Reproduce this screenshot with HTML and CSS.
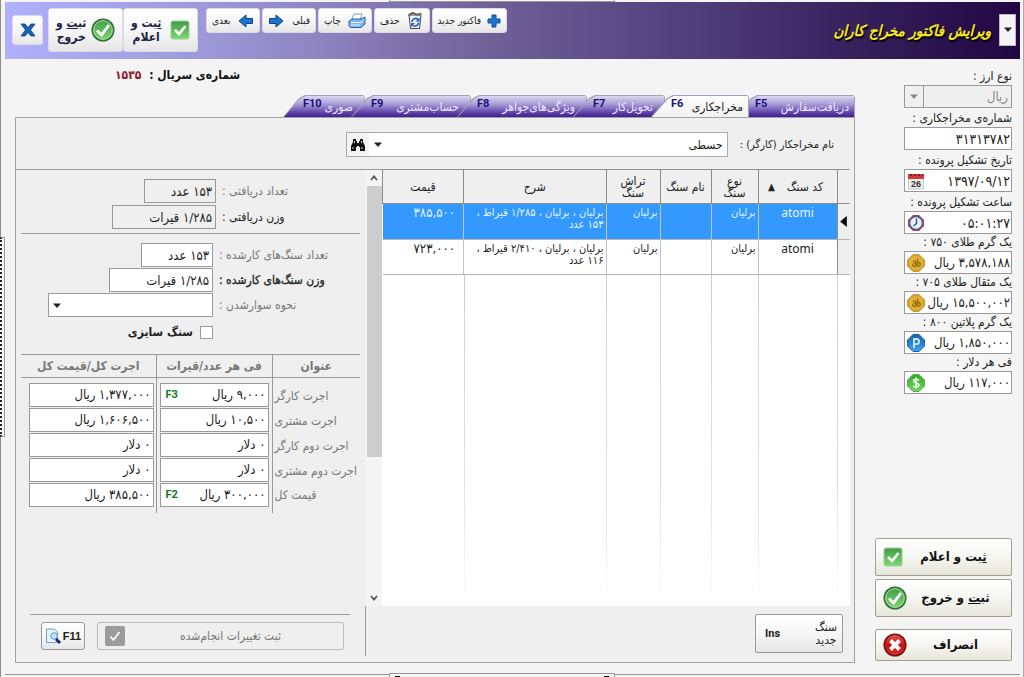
FILE: index.html
```html
<!DOCTYPE html>
<html lang="fa" dir="rtl">
<head>
<meta charset="utf-8">
<title>ویرایش فاکتور مخراج کاران</title>
<link rel="stylesheet" href="styles.css">
</head>
<body>
<svg class="sprite" aria-hidden="true">
  <defs>
    <linearGradient id="green" x1="0" y1="0" x2="0" y2="1"><stop offset="0" stop-color="#3f9a46"/><stop offset="1" stop-color="#7fd873"/></linearGradient>
    <radialGradient id="coin"><stop offset="0" stop-color="#d9a11c"/><stop offset="0.7" stop-color="#e2b43a"/><stop offset="1" stop-color="#c8961c"/></radialGradient>
    <linearGradient id="blue" x1="0" y1="0" x2="0" y2="1"><stop offset="0" stop-color="#1561b0"/><stop offset="1" stop-color="#3fa6ec"/></linearGradient>
    <linearGradient id="lime" x1="0" y1="0" x2="0" y2="1"><stop offset="0" stop-color="#35a52c"/><stop offset="1" stop-color="#6fdc58"/></linearGradient>
    <linearGradient id="red" x1="0" y1="0" x2="0" y2="1"><stop offset="0" stop-color="#e05a5a"/><stop offset="0.5" stop-color="#c41212"/><stop offset="1" stop-color="#d83030"/></linearGradient>
  </defs>
  <symbol id="i-square" viewBox="0 0 20 20"><rect x="1" y="1" width="18" height="18" rx="2" fill="url(#green)" stroke="#9ccf9c"/><path d="M5 10l4 4 6.500-8" fill="none" stroke="#fff" stroke-width="2.600"/></symbol>
  <symbol id="i-round" viewBox="0 0 24 24"><circle cx="12" cy="12" r="10.800" fill="url(#green)" stroke="#2f6f3a" stroke-width="1.500"/><circle cx="12" cy="12" r="9.300" fill="none" stroke="#a6dba0"/><path d="M6 12.500l4.500 4.500L18 7" fill="none" stroke="#fff" stroke-width="2.800"/></symbol>
  <symbol id="i-cancel" viewBox="0 0 24 24"><circle cx="12" cy="12" r="10.800" fill="url(#red)" stroke="#7b1010" stroke-width="1.500"/><path d="M7.500 7.500l9 9M16.500 7.500l-9 9" stroke="#fff" stroke-width="4"/></symbol>
  <symbol id="i-close" viewBox="0 0 16 16"><path d="M1 2h4l3 3.500L11 2h4l-4.500 6L15 14h-4l-3-3.500L5 14H1l4.500-6z" fill="#1763b4" stroke="#0d3f7d" stroke-width=".8"/></symbol>
  <symbol id="i-plus" viewBox="0 0 14 14"><path d="M5 1h4v4h4v4H9v4H5V9H1V5h4z" fill="#1c74cf" stroke="#114c92"/></symbol>
  <symbol id="i-left" viewBox="0 0 16 14"><path d="M1 7l7-6v3.500h6.500v5H8V13z" fill="#1c74cf" stroke="#0f4286"/></symbol>
  <symbol id="i-right" viewBox="0 0 16 14"><path d="M15 7L8 1v3.500H1.500v5H8V13z" fill="#1c74cf" stroke="#0f4286"/></symbol>
  <symbol id="i-print" viewBox="0 0 18 16"><path d="M6 1h8l-2 6H3.500z" fill="#fff" stroke="#6f9fd0"/><path d="M1 8l3-2h9l4-2v7l-4 3.500H2.500L1 13z" fill="#7db5ea" stroke="#2a66ad"/><path d="M3 9.500h10l3-2.500M3 12h9" fill="none" stroke="#e8f4ff"/></symbol>
  <symbol id="i-trash" viewBox="0 0 16 18"><path d="M2 3h12l-1.500 13.500H3.500z" fill="#f1f1f4" stroke="#44444c"/><path d="M1.500 3l4-2 5 1.500 4-1" fill="none" stroke="#6b5a4a" stroke-width="1.800"/><path d="M5 10a3.500 3.500 0 0 1 6-2.500M11.500 10.500a3.500 3.500 0 0 1-6 2.500" fill="none" stroke="#2a62c4" stroke-width="1.700"/><path d="M12.500 5.500v4h-4zM4 15v-4h4z" fill="#2a62c4"/></symbol>
  <symbol id="i-find" viewBox="0 0 16 14"><path d="M3 1h3v2h1v2h2V3h1V1h3v3l2 4v5h-5V9H9v-1H7v1H6v4H1V8l2-4z" fill="#111"/><path d="M3 9v2M4.500 3v2M11.500 3v2M12 9v2" stroke="#fff" stroke-width=".8"/></symbol>
  <symbol id="i-clock" viewBox="0 0 18 18"><path d="M6 1h6l5 5v6l-5 5H6l-5-5V6z" fill="#b23a48"/><circle cx="9" cy="9" r="6.300" fill="#e9f3ff" stroke="#3f68b0" stroke-width="1.200"/><path d="M9.500 4.500V9.500L6.500 12" fill="none" stroke="#2a55a5" stroke-width="1.500"/></symbol>
  <symbol id="i-gold" viewBox="0 0 18 18"><path d="M6 .5h6L17.500 6v6L12 17.500H6L.5 12V6z" fill="url(#coin)" stroke="#c29a3a"/><path d="M5.800 7.500c2.500-1.200 3.200 0 3.200 1.500v3.500M9 9.500c-4-.3-4 3-2 3 1.200 0 2-1 2-2M10.500 4.500V12c3.500 1.200 4-4 .2-3.500" fill="none" stroke="#8f6a10" stroke-width="1.200"/></symbol>
  <symbol id="i-plat" viewBox="0 0 18 18"><path d="M6 .5h6L17.500 6v6L12 17.500H6L.5 12V6z" fill="url(#blue)" stroke="#1b5c9c"/><path d="M7 14V5h2.500a2.500 2.500 0 0 1 0 5.200H7" fill="none" stroke="#cfe8ff" stroke-width="1.800"/></symbol>
  <symbol id="i-dollar" viewBox="0 0 18 18"><path d="M6 .5h6L17.500 6v6L12 17.500H6L.5 12V6z" fill="url(#lime)" stroke="#5dab55"/><path d="M12 6.500C10 4.500 6.500 5 6.500 7s5.500 2 5.500 4-3.500 2.800-6 .8M9 3.500v11" fill="none" stroke="#eaffea" stroke-width="1.700"/></symbol>
  <symbol id="i-page" viewBox="0 0 16 16"><path d="M1.500 1h8l3 3v10.500h-11z" fill="#eaf5fb" stroke="#6da3c4"/><circle cx="9" cy="8" r="3.300" fill="#bfe4f5" stroke="#5a9fc8"/><path d="M11 11l4 4" stroke="#16246e" stroke-width="2.800"/></symbol>
  <symbol id="i-gray" viewBox="0 0 20 20"><rect width="20" height="20" rx="2" fill="#9b9b9b"/><path d="M5.500 10.500l3 3.500 6-8" fill="none" stroke="#fff" stroke-width="1.700"/></symbol>
  <symbol id="i-down" viewBox="0 0 8 5"><path d="M0 0h8L4 4.500z" fill="currentColor"/></symbol>
  <symbol id="i-chev-up" viewBox="0 0 8 6"><path d="M1 5l3-3.500L7 5" fill="none" stroke="#555" stroke-width="1.800"/></symbol>
  <symbol id="i-chev-down" viewBox="0 0 8 6"><path d="M1 1l3 3.500L7 1" fill="none" stroke="#555" stroke-width="1.800"/></symbol>
</svg>

<div class="window">
  <header class="titlebar">
    <button class="menu-toggle" aria-label="فهرست"><svg class="arrow"><use href="#i-down"/></svg></button>
    <h1 class="title">ویرایش فاکتور مخراج کاران</h1>
    <nav class="toolbar">
      <button class="tool"><svg class="ic14"><use href="#i-plus"/></svg><span>فاکتور جدید</span></button>
      <button class="tool"><svg class="ic18"><use href="#i-trash"/></svg><span>حذف</span></button>
      <button class="tool"><svg class="ic18"><use href="#i-print"/></svg><span>چاپ</span></button>
      <button class="tool"><span>قبلی</span><svg class="ic16"><use href="#i-right"/></svg></button>
      <button class="tool"><svg class="ic16"><use href="#i-left"/></svg><span>بعدی</span></button>
    </nav>
    <div class="commit">
      <button class="commit-btn"><svg class="ic20"><use href="#i-square"/></svg><span><u>ث</u>بت و<br>اعلام</span></button>
      <button class="commit-btn"><svg class="ic24"><use href="#i-round"/></svg><span>ثب<u>ت</u> و<br>خروج</span></button>
    </div>
    <button class="close" aria-label="بستن"><svg class="ic16"><use href="#i-close"/></svg></button>
  </header>

  <div class="body">
    <aside class="side">
      <div class="facts">
        <div class="fact"><label for="cur">نوع ارز :</label><div class="pick currency"><select id="cur" class="field" disabled><option>ریال</option></select><span class="pick-arrow"><svg class="arrow"><use href="#i-down"/></svg></span></div></div>
        <div class="fact"><label for="no">شماره‌ی مخراجکاری :</label><div class="box digits"><input id="no" value="۳۱۳۱۳۷۸۲"></div></div>
        <div class="fact"><label for="dt">تاریخ تشکیل پرونده :</label><div class="box digits"><input id="dt" value="۱۳۹۷/۰۹/۱۲"><svg class="ic18" viewBox="0 0 18 18"><rect x="1.500" y="4" width="15" height="13" fill="#eee" stroke="#c8c8c8"/><rect x="1" y="2" width="16" height="5" fill="#cf3b3b"/><path d="M3 3h2M7 3h2M11 3h2M15 3h1" stroke="#8b1a1a" stroke-width="2"/><text class="day" x="9" y="15" direction="ltr" text-anchor="middle">26</text></svg></div></div>
        <div class="fact"><label for="tm">ساعت تشکیل پرونده :</label><div class="box digits"><input id="tm" value="۰۵:۰۱:۲۷"><svg class="ic18"><use href="#i-clock"/></svg></div></div>
      </div>
      <div class="facts rates">
        <div class="fact"><label for="g1">یک گرم طلای ۷۵۰ :</label><div class="box"><input id="g1" value="۳,۵۷۸,۱۸۸ ریال"><svg class="ic18"><use href="#i-gold"/></svg></div></div>
        <div class="fact"><label for="g2">یک مثقال طلای ۷۰۵ :</label><div class="box"><input id="g2" value="۱۵,۵۰۰,۰۰۲ ریال"><svg class="ic18"><use href="#i-gold"/></svg></div></div>
        <div class="fact"><label for="pt">یک گرم پلاتین ۸۰۰ :</label><div class="box"><input id="pt" value="۱,۸۵۰,۰۰۰ ریال"><svg class="ic18"><use href="#i-plat"/></svg></div></div>
        <div class="fact"><label for="us">فی هر دلار :</label><div class="box"><input id="us" value="۱۱۷,۰۰۰ ریال"><svg class="ic18"><use href="#i-dollar"/></svg></div></div>
      </div>
      <div class="actions">
        <button class="action"><span><u>ث</u>بت و اعلام</span><svg class="ic20"><use href="#i-square"/></svg></button>
        <button class="action"><span>ثب<u>ت</u> و خروج</span><svg class="ic24"><use href="#i-round"/></svg></button>
        <button class="action cancel"><span>انصراف</span><svg class="ic24"><use href="#i-cancel"/></svg></button>
      </div>
    </aside>

    <main class="main">
      <p class="serial">شماره‌ی سریال : <b>۱۵۳۵</b></p>
      <div class="tabs" role="tablist">
        <button class="tab t5" role="tab"><span>دریافت‌سفارش</span><kbd>F5</kbd></button>
        <button class="tab t6 active" role="tab" aria-selected="true"><span>مخراجکاری</span><kbd>F6</kbd></button>
        <button class="tab t7" role="tab"><span>تحویل‌کار</span><kbd>F7</kbd></button>
        <button class="tab t8" role="tab"><span>ویژگی‌های‌جواهر</span><kbd>F8</kbd></button>
        <button class="tab t9" role="tab"><span>حساب‌مشتری</span><kbd>F9</kbd></button>
        <button class="tab t10" role="tab"><span>صوری</span><kbd>F10</kbd></button>
      </div>

      <section class="panel">
        <div class="search">
          <label for="worker">نام مخراجکار (کارگر) :</label>
          <div class="combo">
            <input id="worker" type="text" value="حسطی">
            <button class="drop" aria-label="باز کردن"><svg class="arrow"><use href="#i-down"/></svg></button>
            <button class="find" aria-label="جستجو"><svg class="ic16"><use href="#i-find"/></svg></button>
          </div>
        </div>

        <div class="work">
          <div class="grid-wrap">
            <table class="stones">
              <colgroup><col class="c-mark"><col class="c-code"><col class="c-type"><col class="c-name"><col class="c-cut"><col><col class="c-price"></colgroup>
              <thead>
                <tr><th></th><th><span class="sorted">کد سنگ <i>▲</i></span></th><th>نوع<br>سنگ</th><th>نام سنگ</th><th>تراش<br>سنگ</th><th>شرح</th><th>قیمت</th></tr>
              </thead>
              <tbody>
                <tr class="selected"><td class="mark"><svg viewBox="0 0 6 10"><path d="M6 0v10L0 5z"/></svg></td><td class="code">atomi</td><td>برلیان</td><td></td><td>برلیان</td><td>برلیان ، برلیان ، ۱/۲۸۵ قیراط ،<br>۱۵۳ عدد</td><td class="price">۳۸۵,۵۰۰</td></tr>
                <tr><td class="mark"></td><td class="code">atomi</td><td>برلیان</td><td></td><td>برلیان</td><td>برلیان ، برلیان ، ۲/۴۱۰ قیراط ،<br>۱۱۶ عدد</td><td class="price">۷۲۳,۰۰۰</td></tr>
                <tr class="filler"><td></td><td></td><td></td><td></td><td></td><td></td><td></td></tr>
              </tbody>
            </table>
          </div>
          <div class="scroll">
            <button aria-label="بالا"><svg class="arrow"><use href="#i-chev-up"/></svg></button>
            <div class="track"><div class="thumb"></div></div>
            <button aria-label="پایین"><svg class="arrow"><use href="#i-chev-down"/></svg></button>
          </div>
          <div class="details">
            <div class="form received">
              <label class="dim" for="rc">تعداد دریافتی :</label><input class="field flat w-s" id="rc" value="۱۵۳ عدد" readonly>
              <label for="rw">وزن دریافتی :</label><input class="field flat w-m" id="rw" value="۱/۲۸۵ قیرات" readonly>
            </div>
            <div class="form worked">
              <label class="dim" for="wc">تعداد سنگ‌های کارشده :</label><input class="field w-s" id="wc" value="۱۵۳ عدد">
              <label class="strong" for="ww">وزن سنگ‌های کارشده :</label><input class="field w-m" id="ww" value="۱/۲۸۵ قیرات">
              <label class="dim" for="mt">نحوه سوارشدن :</label>
              <div class="pick w-l"><select id="mt" class="field"><option></option></select><svg class="arrow"><use href="#i-down"/></svg></div>
              <label class="size-check"><input type="checkbox"><span>سنگ سایزی</span></label>
            </div>
            <table class="fees">
              <colgroup><col class="f-title"><col class="f-unit"><col></colgroup>
              <thead><tr><th>عنوان</th><th>فی هر عدد/قیرات</th><th>اجرت کل/قیمت کل</th></tr></thead>
              <tbody>
                <tr><th>اجرت کارگر</th><td><div class="money"><input aria-label="فی اجرت کارگر" value="۹,۰۰۰ ریال"><kbd>F3</kbd></div></td><td><div class="money"><input aria-label="کل اجرت کارگر" value="۱,۳۷۷,۰۰۰ ریال"></div></td></tr>
                <tr><th>اجرت مشتری</th><td><div class="money"><input aria-label="فی اجرت مشتری" value="۱۰,۵۰۰ ریال"></div></td><td><div class="money"><input aria-label="کل اجرت مشتری" value="۱,۶۰۶,۵۰۰ ریال"></div></td></tr>
                <tr><th>اجرت دوم کارگر</th><td><div class="money"><input aria-label="فی اجرت دوم کارگر" value="۰ دلار"></div></td><td><div class="money"><input aria-label="کل اجرت دوم کارگر" value="۰ دلار"></div></td></tr>
                <tr><th>اجرت دوم مشتری</th><td><div class="money"><input aria-label="فی اجرت دوم مشتری" value="۰ دلار"></div></td><td><div class="money"><input aria-label="کل اجرت دوم مشتری" value="۰ دلار"></div></td></tr>
                <tr><th>قیمت کل</th><td><div class="money"><input aria-label="فی قیمت کل" value="۳۰۰,۰۰۰ ریال"><kbd>F2</kbd></div></td><td><div class="money"><input aria-label="جمع قیمت کل" value="۳۸۵,۵۰۰ ریال"></div></td></tr>
              </tbody>
            </table>
          </div>
        </div>

        <div class="panel-foot">
          <div class="foot-main"><button class="new-stone"><span>سنگ<br>جدید</span><kbd>Ins</kbd></button></div>
          <div class="foot-side">
            <button class="save" disabled><span>ثبت تغییرات انجام‌شده</span><svg class="ic20"><use href="#i-gray"/></svg></button>
            <button class="preview"><b>F11</b><svg class="ic16"><use href="#i-page"/></svg></button>
          </div>
        </div>
      </section>
    </main>
  </div>
  <div class="grip grip-left"></div>
  <div class="grip grip-top"></div>
  <div class="grip grip-bottom"></div>
</div>
</body>
</html>
```
FILE: styles.css
```css
* { box-sizing: border-box; }
body {
  margin: 0;
  background: #f4f4f4;
  color: #222;
  font: 12px/16px "DejaVu Sans Condensed", "DejaVu Sans", sans-serif;
}
button, input, select { font: inherit; color: inherit; margin: 0; }
button { padding: 0; border: 0; background: none; }
svg { display: block; flex: none; }
kbd { font: 700 11px/16px "Roboto", "Liberation Sans", sans-serif; }
.sprite { position: absolute; width: 0; height: 0; }
.arrow { width: 8px; height: 6px; }
.ic14 { width: 14px; height: 14px; }
.ic16 { width: 16px; height: 16px; }
.ic18 { width: 18px; height: 18px; }
.ic20 { width: 20px; height: 20px; }
.ic24 { width: 24px; height: 24px; }

.window {
  position: relative;
  display: flex;
  flex-direction: column;
  min-height: 100vh;
  padding: 2px 3px 2px 4px;
  border-right: 1px solid #aaa;
  border-left: 1px solid #8c8c8c;
}
.window::after { content: ""; height: 1px; background: #999; }
.grip { position: absolute; background: #f7f7f7; border: 1px solid #999; }
.grip-left { left: -1px; top: 35%; width: 5px; height: 200px; border-left: 2px dotted #222; }
.grip-top { left: 38%; top: -1px; width: 226px; height: 3px; }
.grip-bottom { left: 38%; bottom: 0; width: 226px; height: 4px; border-bottom: 0; }
.grip-bottom::before, .grip-bottom::after { content: ""; position: absolute; top: 2px; width: 5px; height: 2px; background: #111; }
.grip-bottom::before { left: 5px; }
.grip-bottom::after { right: 5px; }

/* title bar */
.titlebar {
  display: flex;
  align-items: flex-start;
  height: 57px;
  padding: 6px 4px 0 7px;
  background: linear-gradient(to right, #b0b0fc 0, #9d98d8 20%, #8f86c2 30%, #6f6098 48%, #53417f 66%, #35205c 84%, #210642 100%);
}
.menu-toggle {
  display: grid;
  place-items: center;
  width: 17px;
  height: 32px;
  margin-top: 6px;
  background: #f6f4f8;
  border: 1px solid #bbb;
}
.title {
  flex: 1;
  margin: 7px 8px 0 0;
  color: #f6e81c;
  font: italic 700 15px/32px "DejaVu Sans Condensed", "DejaVu Sans", sans-serif;
  text-shadow: 1px 2px 1px #000;
  white-space: nowrap;
}
.toolbar { display: flex; gap: 2px; }
.tool, .commit-btn, .close, .new-stone, .preview {
  background: linear-gradient(#ffffff, #f6f6f6 50%, #e6e6e6);
  border: 1px solid #dcdae8;
  border-radius: 3px;
}
.tool {
  display: flex;
  align-items: center;
  justify-content: space-between;
  gap: 6px;
  height: 25px;
  min-width: 54px;
  padding: 0 5px;
  font-size: 10px;
}
.commit { display: flex; margin-right: 8px; }
.commit-btn {
  display: flex;
  align-items: center;
  justify-content: space-between;
  width: 75px;
  height: 44px;
  padding: 0 7px;
  color: #1c1c48;
  font-weight: 700;
  line-height: 14px;
}
.close { display: grid; place-items: center; width: 31px; height: 30px; margin: 7px 5px 0 0; }

/* body */
.body { display: flex; flex: 1; gap: 20px; padding: 0 8px 11px 10px; }
.main { display: flex; flex: 1; flex-direction: column; min-width: 0; }
.serial {
  margin: 0;
  padding: 8px 0 12px 100px;
  color: #111;
  font-weight: 700;
  text-align: left;
}
.serial b { margin-right: 4px; color: #8d1a2c; }

.tabs { display: flex; height: 22px; }
.tab {
  position: relative;
  display: flex;
  align-items: center;
  justify-content: space-between;
  height: 22px;
  margin-right: -14px;
  padding: 2px 12px 0 20px;
  background: #a5a1b8;
  clip-path: polygon(0 100%, 16px 3px, 22px 0, calc(100% - 2px) 0, 100% 2px, 100% 100%);
  color: #efe9ff;
  white-space: nowrap;
}
.tab::before {
  content: "";
  position: absolute;
  inset: 1px;
  bottom: 0;
  background: linear-gradient(#dcd8f0, #a59ad4 40%, #5d40aa 80%, #40208c);
  clip-path: polygon(0 100%, 16px 3px, 22px 0, 100% 0, 100% 100%);
}
.tab span, .tab kbd { position: relative; }
.tab kbd { color: #17107c; line-height: 14px; align-self: flex-start; }
.tab.active { z-index: 7; color: #222; }
.tab.active::before { background: linear-gradient(#fff, #f1f1f1); }
.t5 { width: 120px; margin-right: 0; padding-right: 6px; z-index: 6; }
.t6 { width: 98px; padding-right: 6px; }
.t7 { width: 92px; z-index: 5; }
.t8 { width: 130px; z-index: 4; }
.t9 { width: 120px; z-index: 3; }
.t10 { width: 82px; z-index: 2; }

.panel {
  display: flex;
  flex: 1;
  flex-direction: column;
  border: 1px solid #a2a2a2;
  background: #efefef;
}
.search { display: flex; align-items: center; gap: 12px; padding: 14px 20px 12px 0; font-size: 11px; }
.search label { white-space: nowrap; }
.combo { display: flex; width: 382px; height: 25px; margin-left: auto; background: #fff; border: 1px solid #aaa; }
.combo input { flex: 1; min-width: 0; padding: 0 4px; border: 0; outline: 0; background: none; font-size: 12px; }
.drop, .find { display: grid; place-items: center; width: 18px; }
.find { width: 22px; background: #f4f4f4; }
.work { display: flex; flex: 1; padding: 0 4px 0 0; }
.grid-wrap { flex: 1; background: #fff; }

.stones { width: 100%; height: 100%; table-layout: fixed; border-collapse: collapse; }
.c-mark { width: 13px; }
.c-code { width: 79px; }
.c-type { width: 47px; }
.c-name { width: 51px; }
.c-cut { width: 54px; }
.c-price { width: 81px; }
.stones thead th {
  height: 34px;
  padding: 0;
  background: #efefef;
  border: solid #8c8c8c;
  border-width: 1px 0 1px 1px;
  font-weight: 400;
  line-height: 12px;
}
.sorted { display: flex; align-items: center; justify-content: center; gap: 12px; padding-right: 4px; }
.sorted i { font-size: 10px; font-style: normal; }
.stones td {
  height: 35px;
  padding: 3px 2px;
  border-left: 1px solid #c4c4c4;
  border-bottom: 1px solid #b4b4b4;
  vertical-align: top;
  font-size: 11px;
  line-height: 12px;
  white-space: nowrap;
}
.stones .code { text-align: center; font-family: "Noto Sans", sans-serif; font-size: 12px; }
.stones .price { padding-right: 8px; border-left: 0; font-size: 13px; }
.selected td { background: #3399ff; color: #e4f3ff; }
.stones .mark { padding: 12px 3px; background: #efefef; border-left-color: #8c8c8c; color: #000; }
.mark svg { width: 7px; height: 11px; }
.stones .filler td {
  height: auto;
  border: 0;
  background: linear-gradient(#cfcfcf, #e4e4e4 70%, #fff) left / 1px 100% no-repeat;
}
.stones .filler td:last-child { background: none; }

.scroll { display: flex; flex-direction: column; width: 17px; background: #f4f4f4; border-top: 1px solid #999; }
.scroll button { display: grid; place-items: center; height: 16px; }
.track { flex: 1; }
.thumb { width: 15px; height: 67%; background: #cdcdcd; }

/* details */
.details { width: 349px; padding: 0 5px 0 5px; border-top: 1px solid #999; }
.form { display: grid; grid-template-columns: 138px 1fr; column-gap: 6px; row-gap: 2px; align-items: center; }
.form label { text-align: left; white-space: nowrap; }
.received { padding: 9px 0 4px; }
.worked { grid-template-columns: 141px 1fr; padding: 9px 0 14px; border-top: 1px solid #999; row-gap: 1px; }
.dim { color: #777; }
.strong { -webkit-text-stroke: 0.3px; }
.field { height: 24px; padding: 0 3px; background: #fff; border: 1px solid #999; border-radius: 0; outline: 0; font-size: 13px; }
.field.flat { background: #efefef; }
.w-s { width: 72px; }
.w-m { width: 104px; }
.w-l { width: 165px; }
.pick { position: relative; }
.pick select { display: block; width: 100%; appearance: none; }
.pick > .arrow { position: absolute; left: 5px; top: 10px; pointer-events: none; }
.form .size-check { display: flex; grid-column: 2; align-items: center; gap: 7px; padding-top: 6px; font-weight: 700; }
.size-check input { appearance: none; width: 13px; height: 13px; background: #fff; border: 1px solid #999; }

.fees { width: 100%; table-layout: fixed; border-collapse: collapse; }
.f-title { width: 88px; }
.f-unit { width: 116px; }
.fees th { padding: 0; color: #777; white-space: nowrap; }
.fees thead th { height: 23px; border-top: 1px solid #999; border-bottom: 1px solid #999; }
.fees tbody th { font-weight: 400; text-align: left; padding-left: 2px; }
.fees th:not(:last-child), .fees td:nth-child(2) { border-left: 1px solid #999; }
.fees td { padding: 0 3px 1px; }
.fees td:last-child { padding-left: 8px; padding-right: 2px; }
.fees tbody tr:first-child > * { padding-top: 5px; }
.fees tbody tr:last-child > * { padding-bottom: 6px; }
.money { display: flex; align-items: center; height: 24px; padding: 0 2px 0 5px; background: #fff; border: 1px solid #999; font-size: 13px; }
.money input, .box input { flex: 1; width: 0; padding: 0; border: 0; outline: 0; background: none; }
.money kbd { color: #0b7a1c; }

.panel-foot { display: flex; height: 56px; }
.foot-main { flex: 1; padding: 8px 11px; }
.new-stone {
  display: flex;
  align-items: center;
  justify-content: space-between;
  width: 88px;
  height: 39px;
  padding: 0 5px 0 9px;
  border-color: #999;
  border-radius: 2px;
  line-height: 13px;
}
.foot-side {
  display: flex;
  align-items: center;
  gap: 12px;
  width: 350px;
  margin-bottom: 6px;
  padding: 0 21px 0 25px;
  border-right: 1px solid #999;
  background: linear-gradient(#999, #999) 14px 8px / 320px 1px no-repeat;
}
.foot-side button { height: 28px; margin-top: 10px; }
.save { display: flex; flex: 1; align-items: center; padding: 0 7px; border: 1px solid #bbb; border-radius: 2px; color: #777; }
.save span { flex: 1; }
.preview { display: flex; align-items: center; justify-content: center; gap: 2px; width: 44px; border-color: #999; font: 11px "Liberation Sans", sans-serif; }

/* side column */
.side { display: flex; flex-direction: column; width: 137px; }
.facts { display: grid; gap: 2px; padding: 9px 0 0 29px; }
.rates { gap: 0; padding-top: 0; }
.fact label { display: block; height: 17px; line-height: 17px; white-space: nowrap; }
.box, .currency .field { height: 23px; background: #fff; border: 1px solid #999; }
.box { display: flex; align-items: center; gap: 1px; padding: 0 1px 0 2px; font-size: 13px; }
.box.digits { font-size: 14px; }
.day { font: 700 9px "Liberation Sans", sans-serif; fill: #333; }
.currency .field { background: #efefef; color: #888; opacity: 1; }
.pick-arrow { position: absolute; left: 0; top: 0; display: grid; place-items: center; width: 20px; height: 23px; border-right: 1px solid #999; color: #888; }
.actions { display: grid; gap: 3px; margin-top: auto; padding-bottom: 2px; }
.action {
  display: flex;
  align-items: center;
  height: 38px;
  padding: 0 7px;
  background: linear-gradient(#fff, #f6f6f1 50%, #e6e6dc);
  border: 1px solid #a0a08c;
  border-radius: 2px;
  color: #111;
  font-size: 13px;
  font-weight: 700;
}
.action span { flex: 1; }
.action.cancel { height: 32px; margin-top: 9px; }
```
